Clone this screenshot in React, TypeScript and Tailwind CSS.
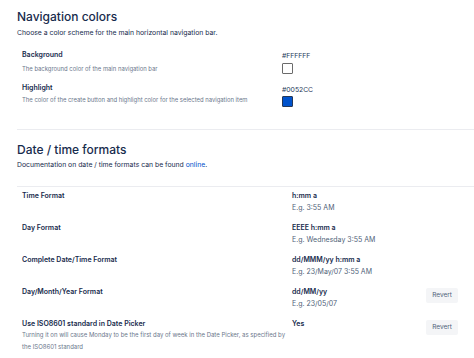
const rows = [
  { label: "Time Format", value: "h:mm a", example: "E.g. 3:55 AM", revert: false },
  { label: "Day Format", value: "EEEE h:mm a", example: "E.g. Wednesday 3:55 AM", revert: false },
  { label: "Complete Date/Time Format", value: "dd/MMM/yy h:mm a", example: "E.g. 23/May/07 3:55 AM", revert: false },
  { label: "Day/Month/Year Format", value: "dd/MM/yy", example: "E.g. 23/05/07", revert: true },
];

function Swatch({ color }: { color: string }) {
  return color === "#FFFFFF" ? (
    <div className="mt-[1.5px] w-[11px] h-[11px] rounded-[1px] border border-[#6b6b6b] bg-white" />
  ) : (
    <div className="mt-[1.5px] w-[11px] h-[11px] rounded-[1px] border border-[#253858] bg-[#0052cc]" />
  );
}

function RevertButton() {
  return (
    <button className="block w-[32px] h-[15px] rounded-[2px] bg-[#f4f5f7] text-[6.5px] leading-[15px] text-[#505f79]">
      Revert
    </button>
  );
}

export default function App() {
  return (
    <div className="w-[474px] h-[358px] overflow-hidden bg-white font-['Inter',sans-serif] text-[#172b4d]">
      {/* Navigation colors */}
      <div className="pl-[17px] pt-[8.5px] h-[129px]">
        <h2 className="text-[12px] leading-[16px] font-medium">Navigation colors</h2>
        <p className="mt-[3.7px] text-[6.85px] leading-[10px] text-[#172b4d]">
          Choose a color scheme for the main horizontal navigation bar.
        </p>

        <div className="mt-[12.3px] pl-[5px] grid grid-cols-[260px_1fr]">
          <div>
            <div className="text-[7px] leading-[10px] font-semibold">Background</div>
            <div className="mt-[4.5px] text-[5.9px] leading-[8px] text-[#6b778c]">
              The background color of the main navigation bar
            </div>
          </div>
          <div>
            <div className="mt-[1px] text-[6.8px] leading-[10px] text-[#253858]">#FFFFFF</div>
            <Swatch color="#FFFFFF" />
          </div>
        </div>

        <div className="mt-[9.5px] pl-[5px] grid grid-cols-[260px_1fr]">
          <div>
            <div className="text-[7px] leading-[10px] font-semibold">Highlight</div>
            <div className="mt-[2.5px] text-[5.9px] leading-[8px] text-[#6b778c] whitespace-nowrap">
              The color of the create button and highlight color for the selected navigation item
            </div>
          </div>
          <div>
            <div className="mt-[1.5px] text-[6.8px] leading-[10px] text-[#253858]">#0052CC</div>
            <Swatch color="#0052CC" />
          </div>
        </div>
      </div>
      <div className="ml-[17px] h-[1px] bg-[#ebecf0]" />

      {/* Date / time formats */}
      <div className="pl-[17px]">
        <h2 className="mt-[11.5px] text-[12px] leading-[16px] font-medium">Date / time formats</h2>
        <p className="mt-[2.7px] text-[6.85px] leading-[10px] text-[#172b4d]">
          Documentation on date / time formats can be found <span className="text-[#0052cc]">online</span>.
        </p>
        <div className="mt-[15.8px] h-[1px] bg-[#ebecf0]" />

        {rows.map((r) => (
          <div key={r.label} className="h-[32px] pt-[4.5px] pl-[5px] pr-[16px] grid grid-cols-[260px_1fr_auto] gap-x-[10px]">
            <div className="text-[7px] leading-[10px] font-semibold">{r.label}</div>
            <div>
              <div className="text-[7px] leading-[10px] font-semibold">{r.value}</div>
              <div className="mt-[1.5px] text-[7px] leading-[10px] text-[#505f79]">{r.example}</div>
            </div>
            <div className="mt-[0.5px]">{r.revert && <RevertButton />}</div>
          </div>
        ))}

        <div className="pt-[4.5px] pl-[5px] pr-[16px] grid grid-cols-[260px_1fr_auto] gap-x-[10px]">
          <div>
            <div className="text-[7px] leading-[10px] font-semibold">Use ISO8601 standard in Date Picker</div>
            <div className="text-[6px] leading-[12px] text-[#6b778c] w-[265px]">
              Turning it on will cause Monday to be the first day of week in the Date Picker, as specified by the
              ISO8601 standard
            </div>
          </div>
          <div className="text-[7px] leading-[10px] font-semibold">Yes</div>
          <div className="mt-[0.5px]">
            <RevertButton />
          </div>
        </div>
      </div>
    </div>
  );
}
